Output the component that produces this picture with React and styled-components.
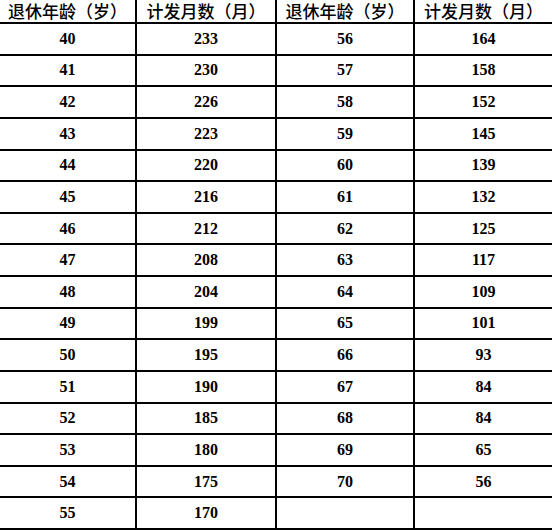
import React from 'react'
import styled, { createGlobalStyle } from 'styled-components'

const GlobalStyle = createGlobalStyle`
    html, body {
        margin: 0;
        padding: 0;
        background: #ffffff;
    }
`

const left = [
    [40, 233], [41, 230], [42, 226], [43, 223], [44, 220], [45, 216],
    [46, 212], [47, 208], [48, 204], [49, 199], [50, 195], [51, 190],
    [52, 185], [53, 180], [54, 175], [55, 170],
]

const right = [
    [56, 164], [57, 158], [58, 152], [59, 145], [60, 139], [61, 132],
    [62, 125], [63, 117], [64, 109], [65, 101], [66, 93], [67, 84],
    [68, 84], [69, 65], [70, 56],
]

const headers = ['退休年龄（岁）', '计发月数（月）', '退休年龄（岁）', '计发月数（月）']

export default function App() {
    const rows = left.map((pair, i) => [...pair, ...(right[i] || ['', ''])])
    return (
        <>
            <GlobalStyle />
            <Table>
                {headers.map((h, i) => (
                    <HeadCell key={'h' + i} last={i === 3}>{h}</HeadCell>
                ))}
                {rows.map((row, r) =>
                    row.map((value, c) => (
                        <Cell key={r + '-' + c} last={c === 3}>{value}</Cell>
                    ))
                )}
            </Table>
        </>
    )
}

const Table = styled.div`
    display: grid;
    grid-template-columns: 137px 140px 138px 137px;
    grid-template-rows: 24px repeat(16, 1fr);
    width: 552px;
    height: 530px;
    color: #000;
`

const CellBase = styled.div`
    box-sizing: border-box;
    display: flex;
    align-items: center;
    justify-content: center;
    border-bottom: 2px solid #000;
    border-right: ${props => props.last ? 'none' : '2px solid #000'};
    white-space: nowrap;
`

const HeadCell = styled(CellBase)`
    font-family: "Noto Sans CJK SC", "Noto Sans", sans-serif;
    font-size: 17px;
    font-weight: 500;
    line-height: 20px;
    padding-bottom: 1px;
`

const Cell = styled(CellBase)`
    font-family: "Liberation Serif", "Times New Roman", serif;
    font-size: 16px;
    font-weight: 700;
`
